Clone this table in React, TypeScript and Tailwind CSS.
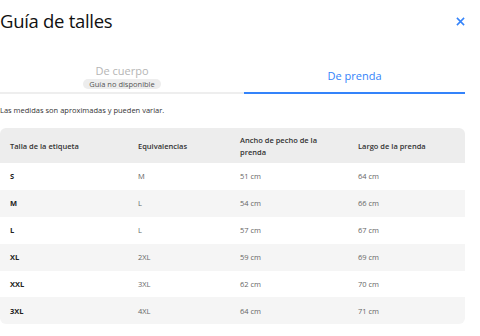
import React from "react";

const rows = [
  ["S", "M", "51 cm", "64 cm"],
  ["M", "L", "54 cm", "66 cm"],
  ["L", "L", "57 cm", "67 cm"],
  ["XL", "2XL", "59 cm", "69 cm"],
  ["XXL", "3XL", "62 cm", "70 cm"],
  ["3XL", "4XL", "64 cm", "71 cm"],
];

export default function App() {
  return (
    <div
      className="w-[480px] h-[336px] bg-white overflow-hidden"
      style={{ fontFamily: '"Open Sans", "Liberation Sans", sans-serif' }}
    >
      <div className="w-[465px]">
        <div className="flex items-center justify-between h-[42px] pt-[1px]">
          <h1 className="text-[18.5px] font-medium text-[#111] tracking-[-0.3px] leading-none">
            Guía de talles
          </h1>
          <svg width="9" height="9" viewBox="0 0 10 10">
            <path d="M1 1L9 9M9 1L1 9" stroke="#3483fa" strokeWidth="1.7" />
          </svg>
        </div>
        <div className="flex mt-[18px] h-[34px]">
          <div className="flex-1 flex flex-col items-center border-b-2 border-[#eeeeee] pt-[4px]">
            <span className="text-[11px] text-[#b5b5b5] leading-[14px]">De cuerpo</span>
            <span className="mt-[1px] rounded-full bg-[#ededed] px-[6px] text-[7.5px] leading-[10px] text-[#555]">
              Guía no disponible
            </span>
          </div>
          <div className="w-[221px] flex items-center justify-center border-b-2 border-[#3483fa]">
            <span className="text-[11px] text-[#3483fa] leading-[14px]">De prenda</span>
          </div>
        </div>
        <p className="mt-[11px] text-[7.5px] text-[#333] leading-[10px]">
          Las medidas son aproximadas y pueden variar.
        </p>
        <div className="mt-[13px] rounded-[6px] overflow-hidden">
          <div className="flex h-[35px] items-center bg-[#ededed] text-[7.5px] font-semibold text-[#333] leading-[12px]">
            <div className="w-[138px] pl-[10px]">Talla de la etiqueta</div>
            <div className="w-[102px]">Equivalencias</div>
            <div className="w-[118px] pr-[20px]">Ancho de pecho de la prenda</div>
            <div className="flex-1">Largo de la prenda</div>
          </div>
          {rows.map((r, i) => (
            <div
              key={i}
              className={`flex h-[26.9px] items-center text-[7.5px] leading-[10px] ${
                i % 2 === 1 ? "bg-[#f5f5f5]" : "bg-white"
              }`}
            >
              <div className="w-[138px] pl-[10px] font-bold text-[#222]">{r[0]}</div>
              <div className="w-[102px] text-[#666]">{r[1]}</div>
              <div className="w-[118px] text-[#666]">{r[2]}</div>
              <div className="flex-1 text-[#666]">{r[3]}</div>
            </div>
          ))}
        </div>
      </div>
    </div>
  );
}
